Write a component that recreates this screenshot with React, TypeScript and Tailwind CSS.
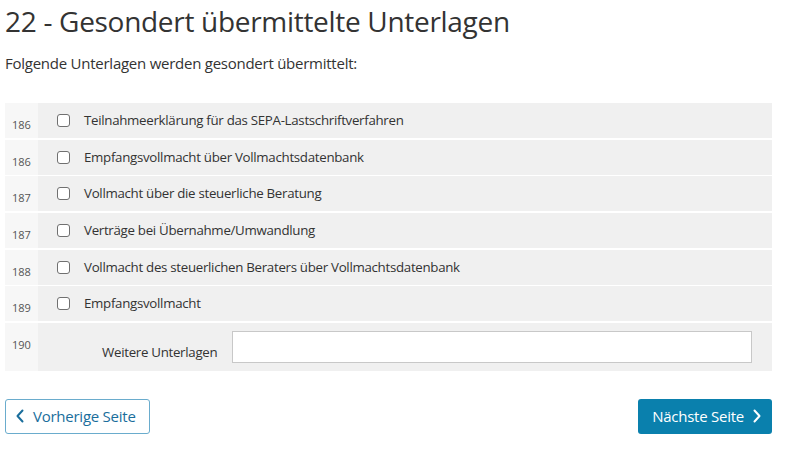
import React from "react";

const items: [string, string][] = [
  ["186", "Teilnahmeerklärung für das SEPA-Lastschriftverfahren"],
  ["186", "Empfangsvollmacht über Vollmachtsdatenbank"],
  ["187", "Vollmacht über die steuerliche Beratung"],
  ["187", "Verträge bei Übernahme/Umwandlung"],
  ["188", "Vollmacht des steuerlichen Beraters über Vollmachtsdatenbank"],
  ["189", "Empfangsvollmacht"],
];

function Num({ n }: { n: string }) {
  return (
    <div className="w-[33px] shrink-0 bg-[#f7f7f7] pl-[7px] pt-[14px] text-[11px] leading-[15px] text-[#555]">
      {n}
    </div>
  );
}

export default function App() {
  return (
    <div
      className="w-[800px] h-[458px] bg-white px-[5px] text-[#333]"
      style={{ fontFamily: '"Open Sans", sans-serif' }}
    >
      <h1 className="pt-[3px] text-[28px] leading-[36px] tracking-[-0.3px] font-normal text-[#333]">
        22 - Gesondert übermittelte Unterlagen
      </h1>
      <p className="mt-[13px] text-[15px] leading-[22px] tracking-[-0.25px] text-[#333]">
        Folgende Unterlagen werden gesondert übermittelt:
      </p>
      <div className="mt-[29px] flex w-[767px] flex-col gap-[1.67px]">
        {items.map(([n, t], i) => (
          <div key={i} className="flex h-[35px]">
            <Num n={n} />
            <div className="flex flex-1 bg-[#f0f0f0] pl-[19px]">
              <span className="mt-[11px] h-[13px] w-[13px] shrink-0 rounded-[3px] border border-[#707070] bg-white" />
              <span className="ml-[14px] pt-[7px] text-[13.3px] leading-[20px] tracking-[-0.3px] text-[#333]">{t}</span>
            </div>
          </div>
        ))}
        <div className="flex h-[48px]">
          <Num n="190" />
          <div className="flex flex-1 items-center bg-[#f0f0f0] pl-[64px] pr-[20px]">
            <span className="pt-[10px] text-[13.3px] leading-[20px] tracking-[-0.3px] text-[#333]">Weitere Unterlagen</span>
            <input
              type="text"
              className="ml-[15px] h-[32px] flex-1 border border-[#c8c8c8] bg-white outline-none"
            />
          </div>
        </div>
      </div>
      <div className="mt-[28px] flex w-[767px] items-center justify-between">
        <button className="flex h-[35px] items-center gap-[9px] rounded-[3px] border border-[#6aaccd] bg-white pl-[10px] pr-[13px] text-[15px] tracking-[-0.25px] text-[#1a6e9c]">
          <svg width="8" height="14" viewBox="0 0 8 14" fill="none">
            <path d="M6.5 1.5 L1.5 7 L6.5 12.5" stroke="#1a6e9c" strokeWidth="2" strokeLinecap="round" strokeLinejoin="round" />
          </svg>
          Vorherige Seite
        </button>
        <button className="flex h-[35px] items-center gap-[9px] rounded-[3px] bg-[#0a80ad] pl-[14px] pr-[11px] text-[15px] tracking-[-0.25px] text-white">
          Nächste Seite
          <svg width="8" height="14" viewBox="0 0 8 14" fill="none">
            <path d="M1.5 1.5 L6.5 7 L1.5 12.5" stroke="#ffffff" strokeWidth="2" strokeLinecap="round" strokeLinejoin="round" />
          </svg>
        </button>
      </div>
    </div>
  );
}
